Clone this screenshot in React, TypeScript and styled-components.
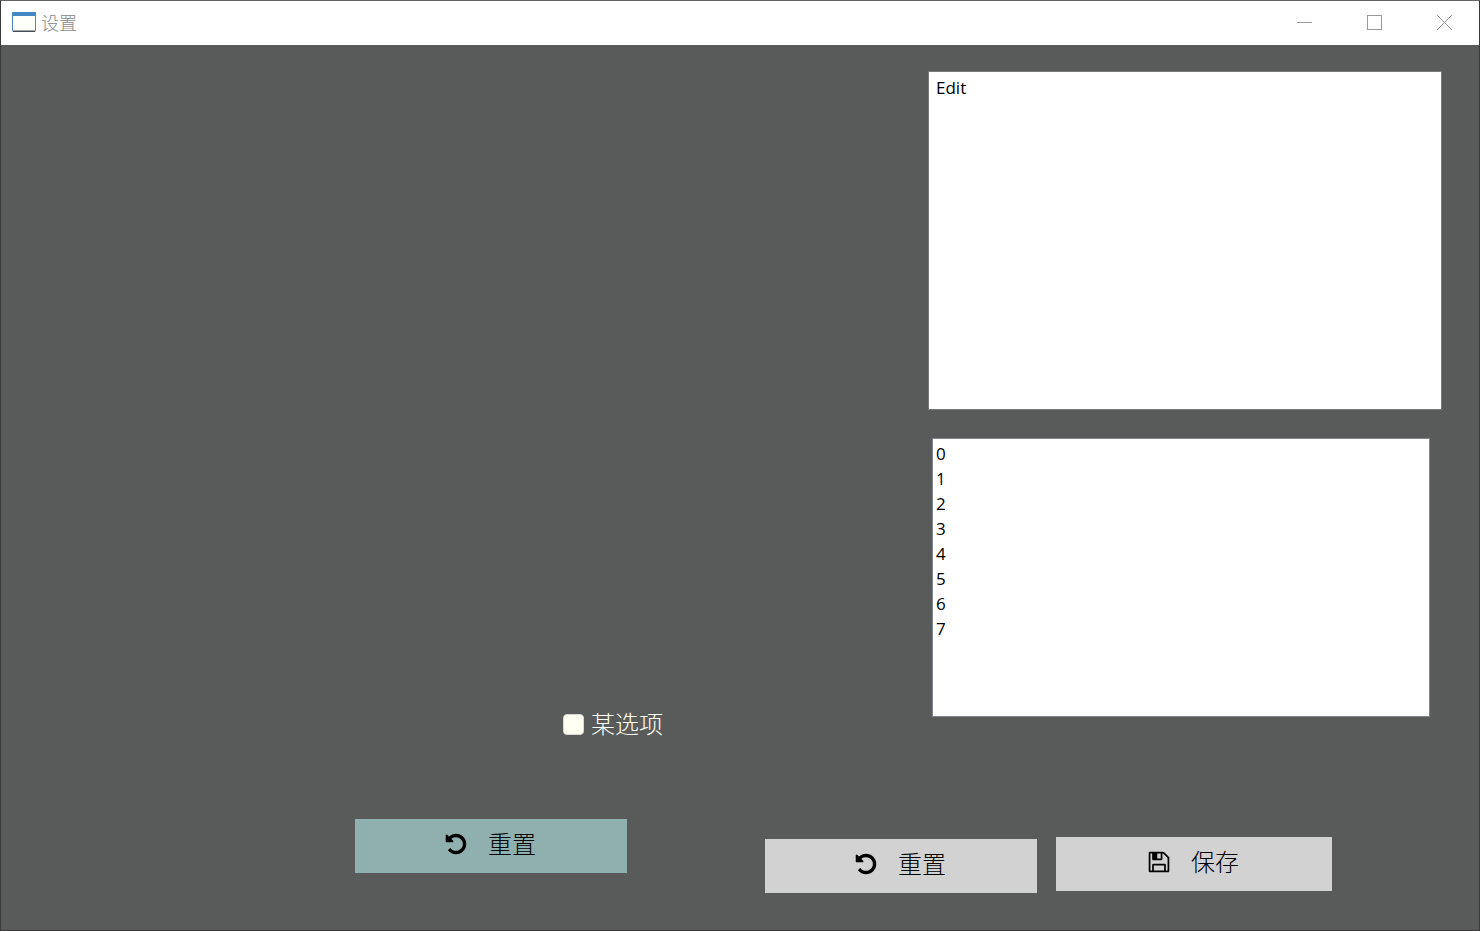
import React from "react";
import styled, { createGlobalStyle } from "styled-components";

const GlobalStyle = createGlobalStyle`
  * { box-sizing: border-box; }
  body { margin: 0; background: #595b5a; }
`;

const uiFont = `"Open Sans", "Noto Sans CJK SC", sans-serif`;
const labelFont = `"Noto Sans CJK SC", sans-serif`;

const Window = styled.div`
  display: flex;
  flex-direction: column;
  min-height: 100vh;
  border: 1px solid #3a3b3b;
  border-top-color: #666364;
  background: #595b5a;
  font-family: ${uiFont};
`;

const TitleBar = styled.header`
  display: flex;
  align-items: center;
  height: 44px;
  padding: 0 0 2px 11px;
  background: #fff;
`;

const Title = styled.h1`
  flex: 1;
  margin: 0 0 0 5px;
  font-family: ${labelFont};
  font-size: 18px;
  font-weight: 300;
  line-height: 24px;
  color: #888;
`;

const CaptionButton = styled.button`
  display: flex;
  align-items: center;
  justify-content: center;
  width: 70px;
  height: 42px;
  padding: 0;
  border: 0;
  background: transparent;
  color: #999;
`;

const Content = styled.main`
  display: flex;
  flex-direction: column;
  gap: 102px;
  padding: 26px 37px 37px 0;
`;

const Upper = styled.div`
  display: flex;
  justify-content: flex-end;
  align-items: stretch;
`;

const Options = styled.div`
  display: flex;
  align-items: flex-end;
  padding: 0 265px 0 0;
`;

const CheckLabel = styled.label`
  display: flex;
  align-items: center;
  gap: 7px;
  height: 36px;
  margin-bottom: -25px;
  color: #fffff4;
`;

const LabelText = styled.span`
  padding-bottom: 2px;
  font-family: ${labelFont};
  font-size: 24px;
  font-weight: 300;
  line-height: 34px;
`;

const CheckBox = styled.input`
  appearance: none;
  width: 21px;
  height: 21px;
  margin: 0;
  border: 1px solid #d8d8d0;
  border-radius: 4px;
  background: #fffff4;
  &:checked { background: #8fb0af; }
`;

const Fields = styled.div`
  display: flex;
  flex-direction: column;
  gap: 28px;
  width: 514px;
`;

const TextArea = styled.textarea`
  display: block;
  width: 100%;
  height: 339px;
  padding: 3px 7px;
  border: 1px solid #7a7a7a;
  border-radius: 0;
  outline: 0;
  resize: none;
  background: #fff;
  color: #000;
  font-family: ${uiFont};
  font-size: 17px;
  line-height: 25px;
`;

const ListBox = styled.select`
  display: block;
  height: 279px;
  margin: 0 12px 0 4px;
  padding: 3px 0;
  border: 1px solid #828790;
  border-radius: 0;
  outline: 0;
  overflow: hidden;
  background: #fff;
  color: #000;
  font-family: ${uiFont};
  font-size: 17px;
`;

const Item = styled.option`
  height: 25px;
  min-height: 25px;
  padding: 0 3px;
  line-height: 25px;
`;

const Actions = styled.div`
  display: flex;
  justify-content: flex-end;
  align-items: flex-start;
  padding-right: 110px;
`;

const ActionButton = styled.button<{ $tone?: "teal"; $wide?: boolean; $drop?: number; $gap?: number }>`
  display: flex;
  align-items: center;
  justify-content: center;
  gap: 20px;
  width: ${(p) => (p.$wide ? 276 : 272)}px;
  height: 54px;
  margin: ${(p) => p.$drop ?? 0}px 0 0 ${(p) => p.$gap ?? 0}px;
  padding: 0 2px 4px 0;
  border: 0;
  background: ${(p) => (p.$tone === "teal" ? "#8fb0af" : "#d2d2d2")};
  color: #000;
`;

const UndoIcon = () => (
  <svg width="24" height="24" viewBox="0 0 1792 1792" fill="currentColor" aria-hidden="true">
    <path d="M1664 896q0 156-61 298t-164 245-245 164-298 61q-172 0-327-72.5t-264-204.5q-7-10-6.5-22.5t8.5-20.5l137-138q10-9 25-9 16 2 23 12 73 95 179 147t225 52q104 0 198.5-40.5t163.5-109.5 109.5-163.5 40.5-198.5-40.5-198.5-109.5-163.5-163.5-109.5-198.5-40.5q-98 0-188 35.5t-160 101.5l137 138q31 30 14 69-17 40-59 40h-448q-26 0-45-19t-19-45v-448q0-42 40-59 39-17 69 14l130 129q107-101 244.5-156.5t284.5-55.5q156 0 298 61t245 164 164 245 61 298z" />
  </svg>
);

const SaveIcon = () => (
  <svg width="24" height="24" viewBox="0 0 1792 1792" fill="currentColor" aria-hidden="true">
    <path d="M512 1536h768v-384h-768v384zm896 0h128v-896q0-14-10-38.5t-20-34.5l-281-281q-10-10-34-20t-39-10v416q0 40-28 68t-68 28h-576q-40 0-68-28t-28-68v-416h-128v1280h128v-416q0-40 28-68t68-28h832q40 0 68 28t28 68v416zm-384-928v-320q0-13-9.5-22.5t-22.5-9.5h-192q-13 0-22.5 9.5t-9.5 22.5v320q0 13 9.5 22.5t22.5 9.5h192q13 0 22.5-9.5t9.5-22.5zm640 32v928q0 40-28 68t-68 28h-1344q-40 0-68-28t-28-68v-1344q0-40 28-68t68-28h928q40 0 88 20t88 48l280 280q28 28 48 68t20 88z" />
  </svg>
);

const WindowIcon = () => (
  <svg width="24" height="20" viewBox="0 0 24 20" aria-hidden="true">
    <rect x="0.5" y="0.5" width="23" height="19" rx="1" fill="#fffffa" stroke="#4a88bd" />
    <rect x="0" y="0" width="24" height="4" rx="1" fill="#4389c5" />
    <rect x="1" y="18.5" width="22" height="1.5" fill="#474f55" />
  </svg>
);

const items = ["0", "1", "2", "3", "4", "5", "6", "7"];

export default function App() {
  return (
    <Window>
      <GlobalStyle />
      <TitleBar>
        <WindowIcon />
        <Title>设置</Title>
        <CaptionButton type="button" aria-label="最小化">
          <svg width="15" height="15" viewBox="0 0 15 15"><path d="M0 7.5h15" stroke="currentColor" /></svg>
        </CaptionButton>
        <CaptionButton type="button" aria-label="最大化">
          <svg width="15" height="15" viewBox="0 0 15 15"><rect x="0.5" y="0.5" width="14" height="14" fill="none" stroke="currentColor" /></svg>
        </CaptionButton>
        <CaptionButton type="button" aria-label="关闭">
          <svg width="15" height="15" viewBox="0 0 15 15"><path d="M0 0l15 15M15 0L0 15" stroke="currentColor" /></svg>
        </CaptionButton>
      </TitleBar>
      <Content>
        <Upper>
          <Options>
            <CheckLabel>
              <CheckBox type="checkbox" />
              <LabelText>某选项</LabelText>
            </CheckLabel>
          </Options>
          <Fields>
            <TextArea aria-label="编辑" defaultValue="Edit" spellCheck={false} />
            <ListBox aria-label="列表" size={11}>
              {items.map((item) => (
                <Item key={item}>{item}</Item>
              ))}
            </ListBox>
          </Fields>
        </Upper>
        <Actions>
          <ActionButton type="button" $tone="teal">
            <UndoIcon />
            <LabelText>重置</LabelText>
          </ActionButton>
          <ActionButton type="button" $drop={20} $gap={138}>
            <UndoIcon />
            <LabelText>重置</LabelText>
          </ActionButton>
          <ActionButton type="button" $wide $drop={18} $gap={19}>
            <SaveIcon />
            <LabelText>保存</LabelText>
          </ActionButton>
        </Actions>
      </Content>
    </Window>
  );
}
